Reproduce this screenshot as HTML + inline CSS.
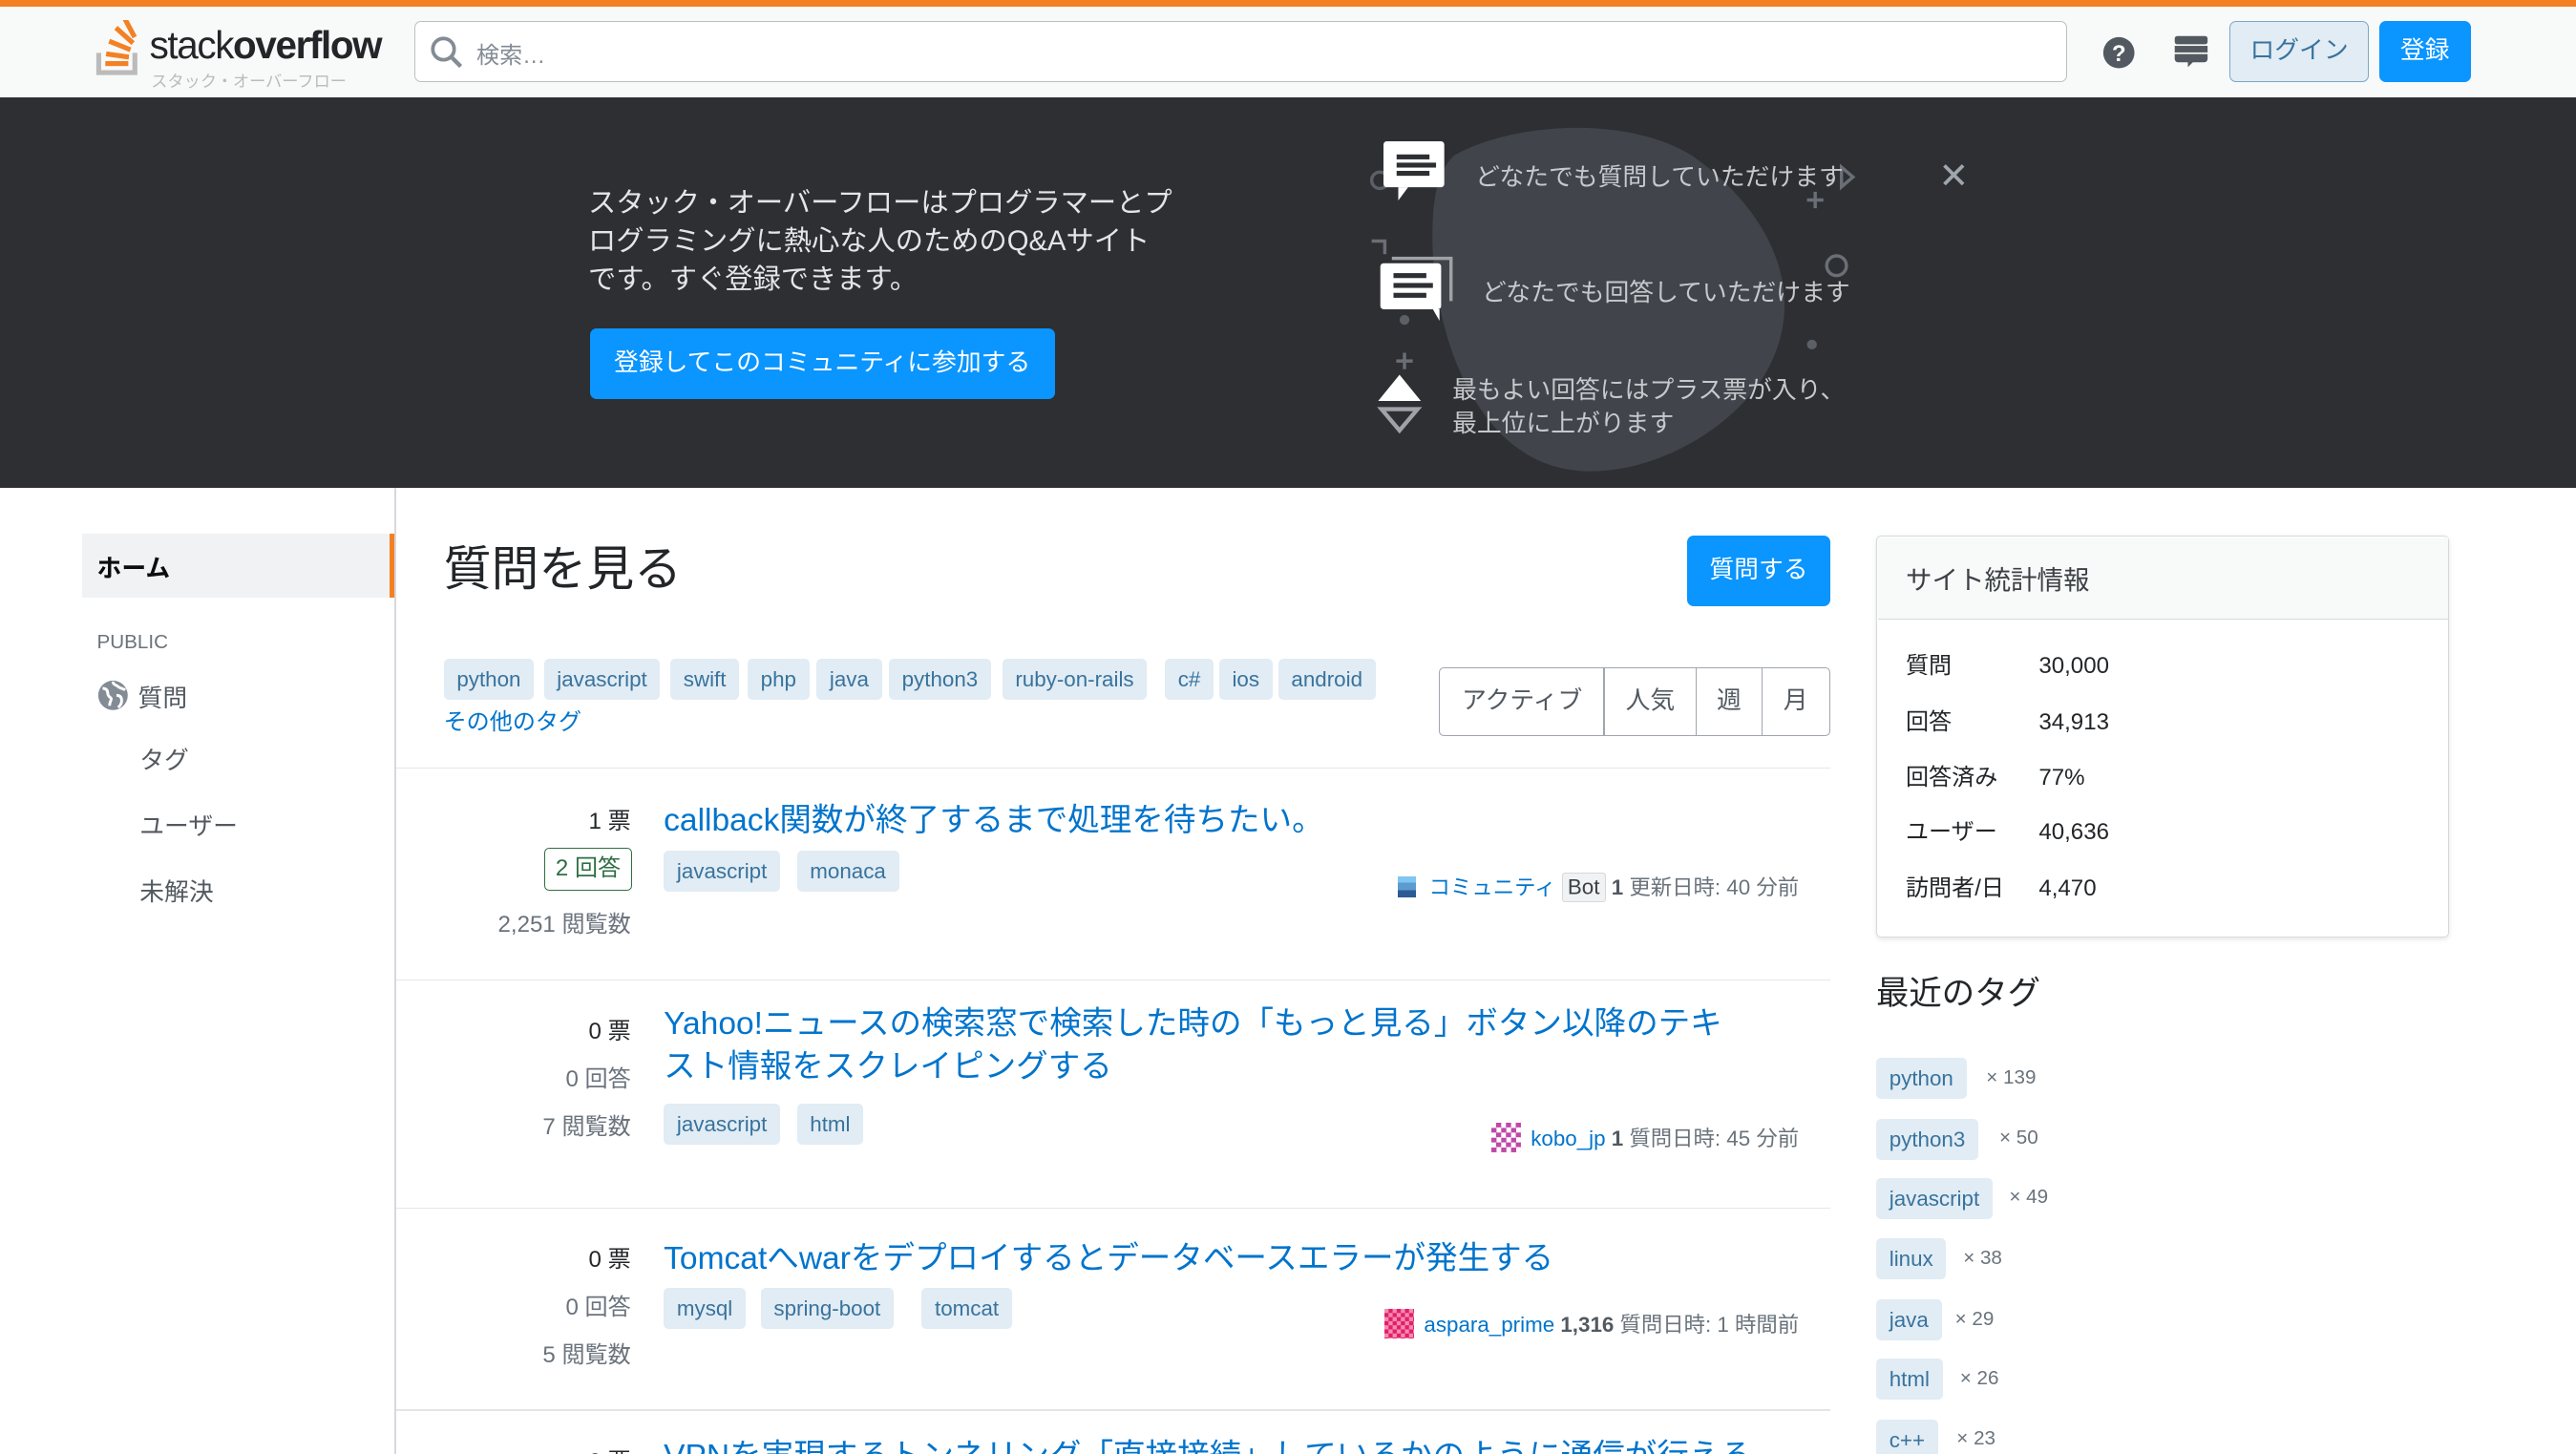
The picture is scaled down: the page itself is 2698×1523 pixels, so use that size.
<!DOCTYPE html>
<html><head><meta charset="utf-8">
<style>
*{box-sizing:border-box;margin:0;padding:0}
html,body{width:2698px;height:1523px;overflow:hidden;background:#fff}
#w{position:relative;width:1568px;height:885px;zoom:1.72066;font-family:"Liberation Sans","Noto Sans CJK JP",sans-serif;color:#232629;overflow:hidden}
.a{position:absolute;white-space:nowrap}
.tag{position:absolute;background:#e1ecf4;color:#39739d;font-size:13px;height:25px;line-height:25px;padding:0 8px;border-radius:3px}
.link{color:#0074cc}
.num{position:absolute;text-align:right;width:120px;font-size:14px}
.meta{position:absolute;right:473px;font-size:13px;color:#6a737c;white-space:nowrap}
.hr{position:absolute;left:241px;width:873px;height:1px;background:#e3e6e8}
.filt{position:absolute;top:406px;height:42px;border:1px solid #9fa6ad;line-height:40px;font-size:15px;color:#525960;text-align:center}
.st{position:absolute;font-size:14px;line-height:20px}
</style></head><body><div id="w">
<!-- header -->
<div class="a" style="left:0;top:0;width:1568px;height:4px;background:#f48024"></div>
<div class="a" style="left:0;top:4px;width:1568px;height:55px;background:#f8f9f9;box-shadow:0 1px 2px rgba(0,0,0,.08)"></div>
<svg class="a" style="left:58px;top:12px" width="32" height="34" viewBox="0 0 32 34">
<path d="M2 20v12h22V20" fill="none" stroke="#bcbbbb" stroke-width="3"/>
<g fill="#f48024"><rect x="6" y="25" width="14" height="3"/><rect x="6.5" y="20" width="14" height="3" transform="rotate(8 13 21)"/><rect x="8" y="14" width="14" height="3" transform="rotate(22 15 15)"/><rect x="11" y="8" width="14" height="3" transform="rotate(42 18 9)"/><rect x="15" y="3" width="13" height="3" transform="rotate(62 21 4)"/></g></svg>
<div class="a" style="left:91px;top:14px;font-size:23.5px;letter-spacing:-.8px;color:#232629">stack<b>overflow</b></div>
<div class="a" style="left:92px;top:41px;font-size:10px;color:#bbb">スタック・オーバーフロー</div>
<div class="a" style="left:252px;top:13px;width:1006px;height:37px;border:1px solid #babfc4;border-radius:4px;background:#fff"></div>
<svg class="a" style="left:261px;top:21px" width="22" height="22" viewBox="0 0 22 22"><circle cx="9" cy="9" r="6.5" fill="none" stroke="#838c95" stroke-width="2.2"/><path d="M13.5 13.5l6 6" stroke="#838c95" stroke-width="2.5"/></svg>
<div class="a" style="left:290px;top:22px;font-size:14px;color:#838c95">検索…</div>
<svg class="a" style="left:1280px;top:22px" width="20" height="20"><circle cx="10" cy="10" r="9.5" fill="#525960"/><text x="10" y="15" font-size="14" font-weight="bold" text-anchor="middle" fill="#fff" font-family="Liberation Sans">?</text></svg>
<svg class="a" style="left:1323px;top:21px" width="22" height="24"><rect x="1" y="1" width="20" height="5" rx="1.5" fill="#525960"/><rect x="1" y="7" width="20" height="4" fill="#525960"/><path d="M1 12h20v3a2 2 0 0 1-2 2h-7l-3 3v-3H3a2 2 0 0 1-2-2z" fill="#525960"/></svg>
<div class="a" style="left:1357px;top:13px;width:85px;height:37px;background:#e1ecf4;border:1px solid #7aa7c7;border-radius:4px;color:#39739d;font-size:15px;text-align:center;line-height:35px">ログイン</div>
<div class="a" style="left:1448px;top:13px;width:56px;height:37px;background:#0a95ff;border-radius:4px;color:#fff;font-size:15px;text-align:center;line-height:37px">登録</div>
<!-- banner -->
<div class="a" style="left:0;top:59px;width:1568px;height:238px;background:#2d2f33"></div>
<div class="a" style="left:358px;top:113px;font-size:17px;line-height:23px;color:#e3e6e8">スタック・オーバーフローはプログラマーとプ<br>ログラミングに熱心な人のためのQ&amp;Aサイト<br>です。すぐ登録できます。</div>
<div class="a" style="left:359px;top:200px;width:283px;height:43px;background:#0a95ff;border-radius:4px;color:#fff;font-size:15px;text-align:center;line-height:43px">登録してこのコミュニティに参加する</div>
<svg class="a" style="left:830px;top:70px" width="300" height="225" viewBox="0 0 300 225">
<path d="M55 25C90 5 160 0 200 25C250 60 275 115 240 165C210 205 150 228 110 212C60 192 42 120 42 75C42 50 45 35 55 25Z" fill="#41444b"/>
<circle cx="10" cy="40" r="5" fill="none" stroke="#5b5f66" stroke-width="2"/>
<path d="M298 38l-7 -6v12z" fill="none" stroke="#6a6e75" stroke-width="2"/>
<path d="M275 47v10M270 52h10M25 145v10M20 150h10" stroke="#6a6e75" stroke-width="2"/>
<circle cx="288" cy="92" r="6" fill="none" stroke="#6a6e75" stroke-width="2"/>
<circle cx="25" cy="125" r="3" fill="#5b5f66"/><circle cx="273" cy="140" r="3" fill="#5b5f66"/>
<path d="M5 77h8v8" fill="none" stroke="#6a6e75" stroke-width="2"/>
</svg>
<svg class="a" style="left:842px;top:86px" width="40" height="36"><rect x="0" y="0" width="37" height="28" rx="2" fill="#fff"/><path d="M9 28l0 8 6-8z" fill="#fff"/><rect x="8" y="8" width="20" height="3" fill="#2d2f33"/><rect x="8" y="13" width="24" height="3" fill="#2d2f33"/><rect x="8" y="18" width="20" height="3" fill="#2d2f33"/></svg>
<div class="a" style="left:898px;top:96px;font-size:15px;color:#c6c9cc">どなたでも質問していただけます</div>
<svg class="a" style="left:839px;top:152px" width="46" height="44"><path d="M8 5h36v26" fill="none" stroke="#9fa2a6" stroke-width="2"/><rect x="1" y="8" width="37" height="28" rx="2" fill="#fff"/><path d="M33 36l4 7v-7z" fill="#fff"/><rect x="9" y="14" width="20" height="3" fill="#2d2f33"/><rect x="9" y="20" width="24" height="3" fill="#2d2f33"/><rect x="9" y="26" width="20" height="3" fill="#2d2f33"/></svg>
<div class="a" style="left:902px;top:166px;font-size:15px;color:#c6c9cc">どなたでも回答していただけます</div>
<svg class="a" style="left:837px;top:226px" width="32" height="40"><path d="M2 18L15 2 28 18z" fill="#fff"/><path d="M4 23h22L15 36z" fill="none" stroke="#9fa2a6" stroke-width="2.5"/></svg>
<div class="a" style="left:884px;top:228px;font-size:15px;line-height:20px;color:#c6c9cc">最もよい回答にはプラス票が入り、<br>最上位に上がります</div>
<div class="a" style="left:1180px;top:94px;font-size:22px;color:#9fa6ad">✕</div>
<!-- left nav -->
<div class="a" style="left:240px;top:297px;width:1px;height:600px;background:#d6d9dc"></div>
<div class="a" style="left:50px;top:325px;width:190px;height:39px;background:#f1f2f3;border-right:3px solid #f48024"></div>
<div class="a" style="left:59px;top:334px;font-size:15px;font-weight:bold;color:#0c0d0e">ホーム</div>
<div class="a" style="left:59px;top:384px;font-size:12px;color:#6a737c">PUBLIC</div>
<svg class="a" style="left:59px;top:414px" width="19" height="19" viewBox="0 0 18 18"><circle cx="9" cy="9" r="8.5" fill="#838c95"/><path d="M3 5c2 0 3 1 3 3s2 2 2 3-1 2-1 4M9 1c0 2 2 2 3 3s3 1 4 2M11 9c2 0 3 1 3 3s-1 3-2 4" fill="none" stroke="#fff" stroke-width="1.6"/></svg>
<div class="a" style="left:84px;top:413px;font-size:15px;color:#525960">質問</div>
<div class="a" style="left:85px;top:451px;font-size:15px;color:#525960">タグ</div>
<div class="a" style="left:85px;top:491px;font-size:15px;color:#525960">ユーザー</div>
<div class="a" style="left:85px;top:531px;font-size:15px;color:#525960">未解決</div>
<!-- main -->
<div class="a" style="left:270px;top:323px;font-size:29px;color:#232629">質問を見る</div>
<div class="a" style="left:1027px;top:326px;width:87px;height:43px;background:#0a95ff;border-radius:4px;color:#fff;font-size:15px;text-align:center;line-height:43px">質問する</div>
<div class="tag" style="left:270px;top:401px">python</div>
<div class="tag" style="left:331px;top:401px">javascript</div>
<div class="tag" style="left:408px;top:401px">swift</div>
<div class="tag" style="left:455px;top:401px">php</div>
<div class="tag" style="left:497px;top:401px">java</div>
<div class="tag" style="left:541px;top:401px">python3</div>
<div class="tag" style="left:610px;top:401px">ruby-on-rails</div>
<div class="tag" style="left:709px;top:401px">c#</div>
<div class="tag" style="left:742px;top:401px">ios</div>
<div class="tag" style="left:778px;top:401px">android</div>
<div class="a link" style="left:270px;top:428px;font-size:14px">その他のタグ</div>
<div class="filt" style="left:876px;width:101px;border-radius:3px 0 0 3px">アクティブ</div>
<div class="filt" style="left:976px;width:57px">人気</div>
<div class="filt" style="left:1032px;width:41px">週</div>
<div class="filt" style="left:1072px;width:42px;border-radius:0 3px 3px 0">月</div>
<div class="hr" style="top:467px"></div>
<!-- Q1 -->
<div class="num" style="left:264px;top:488px">1 票</div>
<div class="a" style="left:331px;top:516px;width:54px;height:26px;border:1px solid #2f6f44;border-radius:3px;color:#2f6f44;font-size:14px;text-align:center;line-height:24px">2 回答</div>
<div class="num" style="left:264px;top:551px;color:#6a737c">2,251 閲覧数</div>
<div class="a link" style="left:404px;top:483px;font-size:19.5px">callback関数が終了するまで処理を待ちたい。</div>
<div class="tag" style="left:404px;top:518px">javascript</div>
<div class="tag" style="left:485px;top:518px">monaca</div>
<div class="meta" style="top:530px"><span style="display:inline-block;width:11px;height:13px;background:linear-gradient(#7fc6f1 0 30%,#5b9bd0 30% 65%,#2b5a95 65%);vertical-align:-2px;margin-right:8px"></span><span class="link">コミュニティ</span> <span style="border:1px solid #d6d9dc;background:#f1f2f3;color:#3b4045;padding:1px 3px;border-radius:2px">Bot</span> <b style="color:#525960">1</b> 更新日時: 40 分前</div>
<div class="hr" style="top:596px"></div>
<!-- Q2 -->
<div class="num" style="left:264px;top:616px">0 票</div>
<div class="num" style="left:264px;top:645px;color:#6a737c">0 回答</div>
<div class="num" style="left:264px;top:674px;color:#6a737c">7 閲覧数</div>
<div class="a link" style="left:404px;top:611px;font-size:19.5px;line-height:26px">Yahoo!ニュースの検索窓で検索した時の「もっと見る」ボタン以降のテキ<br>スト情報をスクレイピングする</div>
<div class="tag" style="left:404px;top:672px">javascript</div>
<div class="tag" style="left:485px;top:672px">html</div>
<div class="meta" style="top:683px"><span style="display:inline-block;width:18px;height:18px;vertical-align:-4px;margin-right:6px;background:repeating-conic-gradient(#c048a8 0 25%,#fff 0 50%) 0 0/6px 6px"></span><span class="link">kobo_jp</span> <b style="color:#525960">1</b> 質問日時: 45 分前</div>
<div class="hr" style="top:735px"></div>
<!-- Q3 -->
<div class="num" style="left:264px;top:755px">0 票</div>
<div class="num" style="left:264px;top:784px;color:#6a737c">0 回答</div>
<div class="num" style="left:264px;top:813px;color:#6a737c">5 閲覧数</div>
<div class="a link" style="left:404px;top:750px;font-size:19.5px">Tomcatへwarをデプロイするとデータベースエラーが発生する</div>
<div class="tag" style="left:404px;top:784px">mysql</div>
<div class="tag" style="left:463px;top:784px">spring-boot</div>
<div class="tag" style="left:561px;top:784px">tomcat</div>
<div class="meta" style="top:796px"><span style="display:inline-block;width:18px;height:18px;vertical-align:-4px;margin-right:6px;background:repeating-conic-gradient(#e0206a 0 25%,#f78ab0 0 50%) 0 0/5px 5px"></span><span class="link">aspara_prime</span> <b style="color:#525960">1,316</b> 質問日時: 1 時間前</div>
<div class="hr" style="top:858px"></div>
<div class="num" style="left:264px;top:878px">0 票</div>
<div class="a link" style="left:404px;top:870px;font-size:19.5px">VPNを実現するトンネリング「直接接続」しているかのように通信が行える</div>
<!-- right -->
<div class="a" style="left:1142px;top:326px;width:349px;height:245px;border:1px solid #d6d9dc;border-radius:3px;box-shadow:0 1px 3px rgba(0,0,0,.1)"></div>
<div class="a" style="left:1143px;top:327px;width:347px;height:50px;background:#f8f9f9;border-bottom:1px solid #d6d9dc"></div>
<div class="a" style="left:1160px;top:340px;font-size:16px;color:#3b4045">サイト統計情報</div>
<div class="st" style="left:1160px;top:396px">質問</div><div class="st" style="left:1241px;top:396px">30,000</div>
<div class="st" style="left:1160px;top:430px">回答</div><div class="st" style="left:1241px;top:430px">34,913</div>
<div class="st" style="left:1160px;top:464px">回答済み</div><div class="st" style="left:1241px;top:464px">77%</div>
<div class="st" style="left:1160px;top:497px">ユーザー</div><div class="st" style="left:1241px;top:497px">40,636</div>
<div class="st" style="left:1160px;top:531px">訪問者/日</div><div class="st" style="left:1241px;top:531px">4,470</div>
<div class="a" style="left:1142px;top:588px;font-size:20px;color:#232629">最近のタグ</div>
<div class="tag" style="left:1142px;top:644px">python</div><div class="a" style="left:1209px;top:649px;font-size:12px;color:#6a737c">× 139</div>
<div class="tag" style="left:1142px;top:681px">python3</div><div class="a" style="left:1217px;top:686px;font-size:12px;color:#6a737c">× 50</div>
<div class="tag" style="left:1142px;top:717px">javascript</div><div class="a" style="left:1223px;top:722px;font-size:12px;color:#6a737c">× 49</div>
<div class="tag" style="left:1142px;top:754px">linux</div><div class="a" style="left:1195px;top:759px;font-size:12px;color:#6a737c">× 38</div>
<div class="tag" style="left:1142px;top:791px">java</div><div class="a" style="left:1190px;top:796px;font-size:12px;color:#6a737c">× 29</div>
<div class="tag" style="left:1142px;top:827px">html</div><div class="a" style="left:1193px;top:832px;font-size:12px;color:#6a737c">× 26</div>
<div class="tag" style="left:1142px;top:864px">c++</div><div class="a" style="left:1191px;top:869px;font-size:12px;color:#6a737c">× 23</div>
</div></body></html>
